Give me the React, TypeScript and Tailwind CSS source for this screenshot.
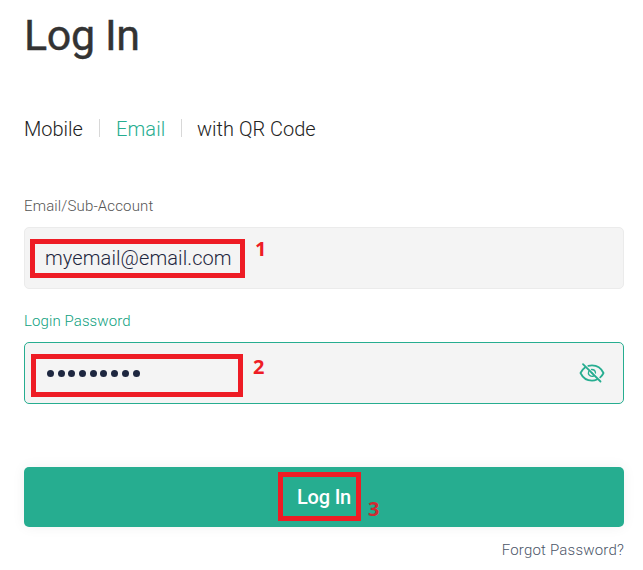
function EyeOff() {
  return (
    <svg width="26" height="22" viewBox="0 0 26 22" fill="none" stroke="#26ad90" strokeWidth="1.8" strokeLinecap="round" strokeLinejoin="round">
      <path d="M6 5.600C4 7 2.500 9 1.500 11c2.300 4.800 6.400 7.600 11.500 7.600 1.800 0 3.500-.4 5-1.100" />
      <path d="M9.300 3.900C10.500 3.600 11.700 3.400 13 3.400c5.100 0 9.200 2.800 11.500 7.600-.8 1.700-1.900 3.200-3.300 4.400" />
      <path strokeWidth="1.300" d="M12.500 7.500c2.200 0 4 1.500 4 3.600" />
      <path strokeWidth="1.300" d="M9.600 9.600c-.8 2.600.9 4.800 3.400 4.800.7 0 1.300-.2 1.800-.5" />
      <path strokeWidth="1.300" d="M12.600 10.600l1.200 1.300" />
      <path d="M4 2.200L21.500 19.500" />
    </svg>
  );
}

const dots = Array.from({ length: 9 });

export default function App() {
  return (
    <main className="relative h-[570px] w-[643px] overflow-hidden bg-white pl-6 pr-[19px] pt-[9px] font-['Roboto',sans-serif] text-[#222]">
      <h1 className="h-[52px] w-max text-[43px] leading-[52px] tracking-[-0.4px] text-[#333] [-webkit-text-stroke:0.4px_#333]">Log In</h1>

      <nav className="mt-[55px] flex h-6 items-center text-[20px] font-light leading-6">
        <span className="w-[75px] pt-px">Mobile</span>
        <span className="h-[18px] w-px bg-[#d8d8d8]" />
        <span className="ml-4 w-[65px] pt-px tracking-[0.1px] text-[#26ad90]">Email</span>
        <span className="h-[18px] w-px bg-[#d8d8d8]" />
        <span className="ml-[15px] pt-px">with QR Code</span>
      </nav>

      <label className="mt-[56px] block h-5 text-[15px] font-light leading-5 tracking-[0.15px] text-[#555]">Email/Sub-Account</label>
      <div className="mt-[11px] flex h-[62px] items-center rounded-[5px] border border-[#ebebeb] bg-[#f4f4f4] pl-5 text-[20px] font-light tracking-[0.1px] text-[#1e2740]">
        myemail@email.com
      </div>

      <label className="mt-[22px] block h-5 text-[15px] font-light leading-5 tracking-[0.1px] text-[#0f9f80]">Login Password</label>
      <div className="mt-[11px] flex h-[62px] items-center justify-between rounded-[5px] border border-[#26ad90] bg-[#f4f4f4] pl-[22px] pr-[18px]">
        <div className="flex gap-[3.700px]">
          {dots.map((_, i) => (
            <span key={i} className="h-[7px] w-[7px] rounded-full bg-[#1e2740]" />
          ))}
        </div>
        <EyeOff />
      </div>

      <button className="mt-[63px] block h-[60px] w-full rounded-[5px] bg-[#26ad90] text-[20px] font-medium tracking-[-0.2px] text-white shadow-[0_0_14px_rgba(0,0,0,0.06)]">
        Log In
      </button>
      <div className="mt-[13px] text-right text-[15px] font-light leading-5 tracking-[0.2px] text-[#4b5568]">Forgot Password?</div>

      <div className="absolute left-[30px] top-[239px] h-[39px] w-[215px] border-[5px] border-[#ee1c25]" />
      <div className="absolute left-[31px] top-[354px] h-[43px] w-[212px] border-[5px] border-[#ee1c25]" />
      <div className="absolute left-[278px] top-[472px] h-[49px] w-[83px] border-[5px] border-[#ee1c25]" />
      <span className="absolute left-[255px] top-[237px] font-['Noto_Sans',sans-serif] text-[20px] font-bold leading-6 text-[#ee1c25]">1</span>
      <span className="absolute left-[253px] top-[355px] font-['Noto_Sans',sans-serif] text-[20px] font-bold leading-6 text-[#ee1c25]">2</span>
      <span className="absolute left-[368px] top-[497px] font-['Noto_Sans',sans-serif] text-[20px] font-bold leading-6 text-[#d02a32]">3</span>
    </main>
  );
}
